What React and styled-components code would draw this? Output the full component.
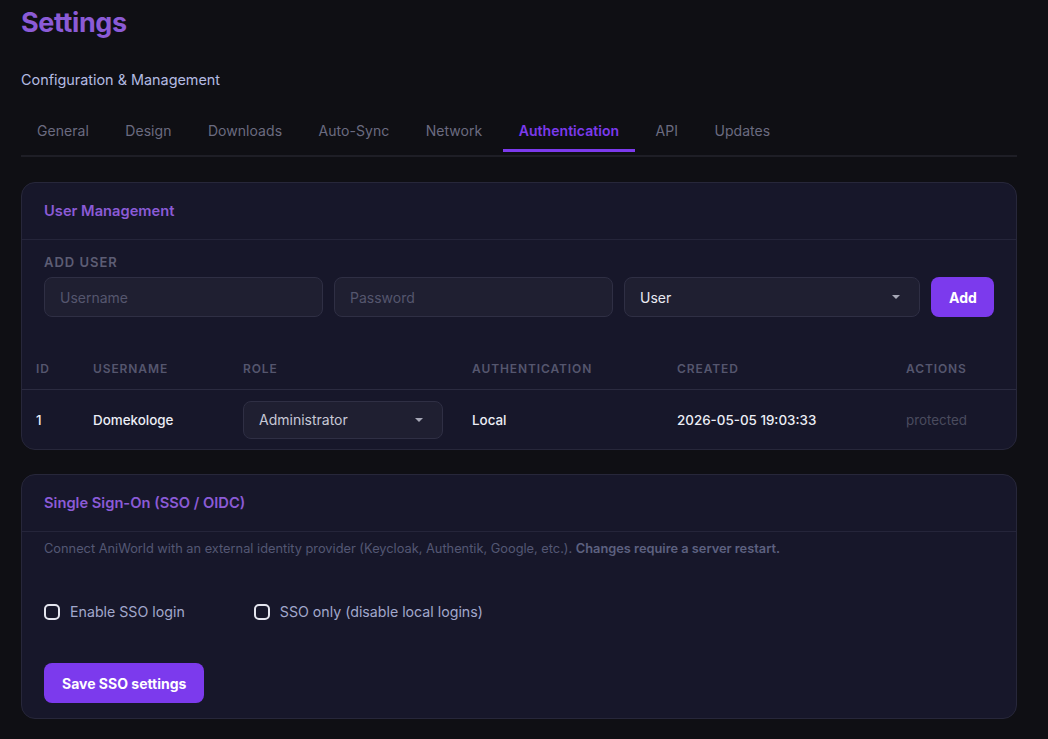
import { useState } from "react";
import styled, { createGlobalStyle } from "styled-components";

const GlobalStyle = createGlobalStyle`
  * { box-sizing: border-box; }
  body {
    margin: 0;
    background: #0f0f14;
    font-family: Inter, "Noto Sans", sans-serif;
    color: #e5e7eb;
  }
`;

const tabs = ["General", "Design", "Downloads", "Auto-Sync", "Network", "Authentication", "API", "Updates"];

const users = [
  { id: 1, name: "Domekologe", role: "Administrator", auth: "Local", created: "2026-05-05 19:03:33" },
];

const Page = styled.div`
  padding: 5px 31px 20px 21px;
`;

const Title = styled.h1`
  margin: 0;
  font-size: 27px;
  line-height: 36px;
  font-weight: 700;
  letter-spacing: -0.4px;
  color: #8b5bd6;
`;

const Subtitle = styled.p`
  margin: 29px 0 0;
  font-size: 14.4px;
  line-height: 20px;
  color: #b4bbe2;
`;

const TabBar = styled.nav`
  display: flex;
  gap: 4.4px;
  margin-top: 20px;
  padding-bottom: 3px;
  border-bottom: 2px solid #1e1e26;
`;

const Tab = styled.button`
  background: none;
  border: none;
  border-bottom: 3px solid ${(p) => (p.$active ? "#7c3aed" : "transparent")};
  padding: 11px 16px 8px;
  font-family: inherit;
  font-size: 14px;
  line-height: 20px;
  letter-spacing: 0.05px;
  font-weight: ${(p) => (p.$active ? 600 : 400)};
  color: ${(p) => (p.$active ? "#7c3aed" : "#6b6b80")};
  cursor: pointer;
`;

const Card = styled.section`
  margin-top: ${(p) => p.$gap || 25}px;
  background: #17172a;
  border: 1px solid #27273a;
  border-radius: 14px;
  overflow: hidden;
`;

const CardHeader = styled.header`
  height: 57px;
  display: flex;
  align-items: center;
  padding: 0 22px;
  border-bottom: 1px solid #25253a;
  font-size: 14.7px;
  font-weight: 600;
  color: #8b5bd6;
`;

const AddSection = styled.div`
  padding: 15px 22px 0;
`;

const Label = styled.div`
  font-size: 13px;
  line-height: 15px;
  font-weight: 600;
  letter-spacing: 0.075em;
  text-transform: uppercase;
  color: #5d5d74;
  margin-bottom: 7px;
`;

const AddRow = styled.div`
  display: grid;
  grid-template-columns: 279px 279px 1fr 63px;
  gap: 11px;
`;

const Input = styled.input`
  height: 40px;
  background: #1f1f31;
  border: 1px solid #2f2f44;
  border-radius: 8px;
  padding: 0 15px;
  font-family: inherit;
  font-size: 14px;
  color: #e5e7eb;
  outline: none;
  &::placeholder { color: #55566e; }
`;

const SelectBox = styled.div`
  height: ${(p) => p.$height || 40}px;
  width: ${(p) => (p.$width ? `${p.$width}px` : "auto")};
  display: flex;
  align-items: center;
  justify-content: space-between;
  padding: 0 15px;
  background: #1f1f31;
  border: 1px solid #2f2f44;
  border-radius: 8px;
  font-size: 14px;
  color: ${(p) => p.$color || "#e8e9f2"};
`;

const Caret = styled.span`
  width: 0;
  height: 0;
  border-left: 4px solid transparent;
  border-right: 4px solid transparent;
  border-top: 4px solid #a6a7b6;
  margin-right: 4px;
`;

const Button = styled.button`
  height: 40px;
  padding: 0 18px;
  border: none;
  border-radius: 8px;
  background: #7c3aed;
  color: #fff;
  font-family: inherit;
  font-size: 14px;
  font-weight: 700;
  cursor: pointer;
`;

const Table = styled.div`
  margin-top: 31px;
`;

const Row = styled.div`
  display: grid;
  grid-template-columns: 57px 150px 229px 205px 229px 1fr;
  align-items: center;
  padding-left: 14px;
  height: ${(p) => (p.$head ? 42 : 59)}px;
  border-bottom: ${(p) => (p.$head ? "1px solid #2b2b40" : "none")};
`;

const HeadCell = styled.div`
  font-size: 12px;
  font-weight: 600;
  letter-spacing: 0.075em;
  text-transform: uppercase;
  color: #55566e;
`;

const Cell = styled.div`
  font-size: 13.4px;
  color: ${(p) => (p.$muted ? "#4a4b5e" : "#eceef6")};
  font-weight: ${(p) => (p.$muted ? 400 : 500)};
`;

const Description = styled.p`
  margin: 0;
  padding: 8px 22px 0;
  font-size: 12.8px;
  line-height: 18px;
  color: #545774;
  b { font-weight: 600; color: #5d6180; }
`;

const CheckRow = styled.div`
  display: flex;
  gap: 69px;
  padding: 44px 22px 0;
`;

const Check = styled.label`
  display: flex;
  align-items: center;
  gap: 10px;
  font-size: 14.2px;
  line-height: 20px;
  color: #a2a8cc;
  cursor: pointer;
`;

const Box = styled.span`
  width: 16px;
  height: 16px;
  border: 2px solid ${(p) => (p.$on ? "#7c3aed" : "#e4e5ee")};
  background: ${(p) => (p.$on ? "#7c3aed" : "transparent")};
  border-radius: 5px;
`;

const Footer = styled.div`
  padding: 41px 22px 15px;
`;

export default function App() {
  const [active, setActive] = useState("Authentication");
  const [sso, setSso] = useState(false);
  const [ssoOnly, setSsoOnly] = useState(false);

  return (
    <Page>
      <GlobalStyle />
      <Title>Settings</Title>
      <Subtitle>Configuration &amp; Management</Subtitle>
      <TabBar>
        {tabs.map((t) => (
          <Tab key={t} $active={t === active} onClick={() => setActive(t)}>
            {t}
          </Tab>
        ))}
      </TabBar>

      <Card>
        <CardHeader>User Management</CardHeader>
        <AddSection>
          <Label>Add user</Label>
          <AddRow>
            <Input placeholder="Username" />
            <Input placeholder="Password" type="password" />
            <SelectBox>
              User
              <Caret />
            </SelectBox>
            <Button>Add</Button>
          </AddRow>
        </AddSection>
        <Table>
          <Row $head>
            <HeadCell>ID</HeadCell>
            <HeadCell>Username</HeadCell>
            <HeadCell>Role</HeadCell>
            <HeadCell>Authentication</HeadCell>
            <HeadCell>Created</HeadCell>
            <HeadCell>Actions</HeadCell>
          </Row>
          {users.map((u) => (
            <Row key={u.id}>
              <Cell>{u.id}</Cell>
              <Cell>{u.name}</Cell>
              <SelectBox $width={200} $height={38} $color="#c7c8d6">
                {u.role}
                <Caret />
              </SelectBox>
              <Cell>{u.auth}</Cell>
              <Cell>{u.created}</Cell>
              <Cell $muted>protected</Cell>
            </Row>
          ))}
        </Table>
      </Card>

      <Card $gap={24}>
        <CardHeader>Single Sign-On (SSO / OIDC)</CardHeader>
        <Description>
          Connect AniWorld with an external identity provider (Keycloak, Authentik, Google, etc.).{" "}
          <b>Changes require a server restart.</b>
        </Description>
        <CheckRow>
          <Check onClick={() => setSso(!sso)}>
            <Box $on={sso} />
            Enable SSO login
          </Check>
          <Check onClick={() => setSsoOnly(!ssoOnly)}>
            <Box $on={ssoOnly} />
            SSO only (disable local logins)
          </Check>
        </CheckRow>
        <Footer>
          <Button>Save SSO settings</Button>
        </Footer>
      </Card>
    </Page>
  );
}
